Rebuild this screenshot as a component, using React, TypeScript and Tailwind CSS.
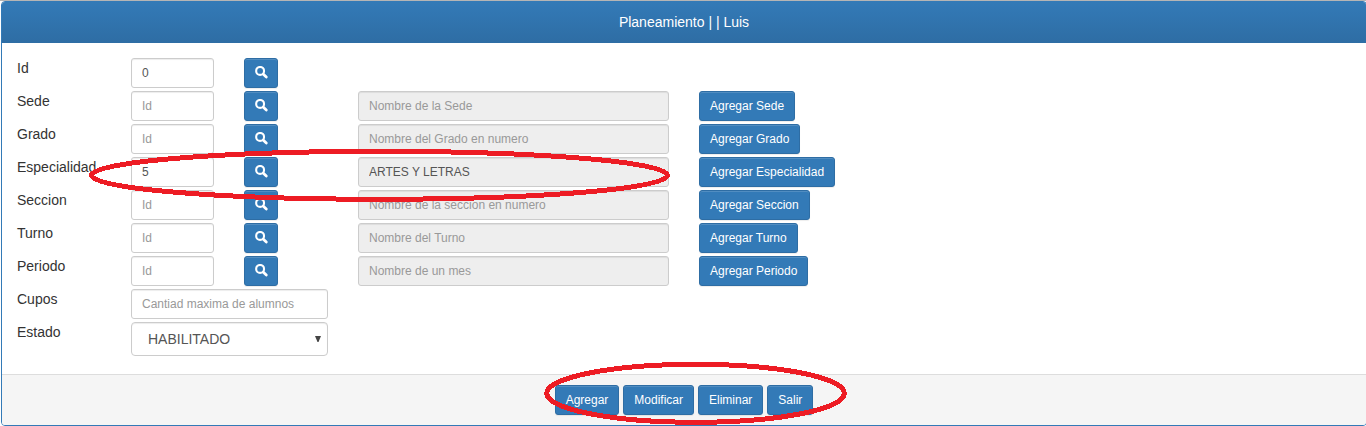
import React from "react";

type Lookup = {
  label: string;
  value?: string;
  description?: string;
  descriptionValue?: string;
  action?: string;
};

const lookups: Lookup[] = [
  { label: "Id", value: "0" },
  { label: "Sede", description: "Nombre de la Sede", action: "Agregar Sede" },
  { label: "Grado", description: "Nombre del Grado en numero", action: "Agregar Grado" },
  { label: "Especialidad", value: "5", descriptionValue: "ARTES Y LETRAS", action: "Agregar Especialidad" },
  { label: "Seccion", description: "Nombre de la seccion en numero", action: "Agregar Seccion" },
  { label: "Turno", description: "Nombre del Turno", action: "Agregar Turno" },
  { label: "Periodo", description: "Nombre de un mes", action: "Agregar Periodo" },
];

const inputClass =
  "block h-[30px] rounded-[3px] border border-[#ccc] px-[10px] text-[12px] leading-[18px] text-[#555] shadow-[inset_0_1px_1px_rgba(0,0,0,0.075)] outline-none placeholder:text-[#999]";

const buttonClass =
  "h-[30px] shrink-0 whitespace-nowrap rounded-[3px] border border-[#2e6da4] bg-[#337ab7] px-[10px] text-[12px] leading-[18px] text-white shadow-[inset_0_1px_0_rgba(255,255,255,0.15),0_1px_1px_rgba(0,0,0,0.075)]";

function SearchIcon() {
  return (
    <svg width="14" height="14" viewBox="0 0 14 14" fill="none" stroke="white" className="block">
      <circle cx="5.1" cy="4.9" r="3.95" strokeWidth="2.1" />
      <path d="M8.4 8.3 L11.3 11.1" strokeWidth="2.8" strokeLinecap="round" />
    </svg>
  );
}

function LookupRow({ row }: { row: Lookup }) {
  return (
    <div className="flex h-[33px] items-start">
      <label className="w-[114px] shrink-0 text-[14px] leading-[20px]">{row.label}</label>
      <input className={`${inputClass} w-[83px] bg-white`} placeholder="Id" defaultValue={row.value} />
      <button className={`${buttonClass} ml-[30px] w-[34px]`} aria-label="Buscar">
        <SearchIcon />
      </button>
      {row.action && (
        <>
          <input
            className={`${inputClass} ml-[80px] w-[311px] bg-[#eee]`}
            readOnly
            placeholder={row.description}
            defaultValue={row.descriptionValue}
          />
          <button className={`${buttonClass} ml-[30px]`}>{row.action}</button>
        </>
      )}
    </div>
  );
}

export default function App() {
  return (
    <div className="relative h-[426px] overflow-hidden border-t border-[#b5b5b5] bg-white pl-px font-['Liberation_Sans',Arial,sans-serif] text-[#333]">
      <div className="flex h-[425px] w-[1366px] flex-col overflow-hidden rounded-[4px] border border-[#337ab7] bg-white">
        <header className="h-[41px] shrink-0 bg-linear-to-b from-[#337ab7] to-[#2e6da4] pt-[10px] text-center text-[14px] leading-[20px] text-white">
          Planeamiento | | Luis
        </header>
        <main className="h-[331px] shrink-0 px-[15px] pt-[15px]">
          {lookups.map((row) => (
            <LookupRow key={row.label} row={row} />
          ))}
          <div className="flex h-[33px] items-start">
            <label className="w-[114px] shrink-0 text-[14px] leading-[20px]">Cupos</label>
            <input className={`${inputClass} w-[197px] bg-white`} placeholder="Cantiad maxima de alumnos" />
          </div>
          <div className="flex items-start">
            <label className="w-[114px] shrink-0 text-[14px] leading-[20px]">Estado</label>
            <div className="flex h-[34px] w-[197px] items-center justify-between rounded-[4px] border border-[#ccc] pl-[16px] pr-[6px] text-[14px] leading-[20px] text-[#555] shadow-[inset_0_1px_1px_rgba(0,0,0,0.075)]">
              <span>HABILITADO</span>
              <svg width="6" height="6" viewBox="0 0 6 6">
                <path d="M0 0H6L3.5 6H2.5Z" fill="#444" />
              </svg>
            </div>
          </div>
        </main>
        <footer className="flex grow items-start justify-center gap-[4px] border-t border-[#ddd] bg-[#f5f5f5] pt-[10px]">
          <button className={buttonClass}>Agregar</button>
          <button className={buttonClass}>Modificar</button>
          <button className={buttonClass}>Eliminar</button>
          <button className={buttonClass}>Salir</button>
        </footer>
      </div>
      <svg
        className="pointer-events-none absolute left-0 -top-px"
        width="1366"
        height="426"
        fill="none"
        stroke="#ed1c24"
        strokeWidth="5"
        shapeRendering="crispEdges"
      >
        <ellipse cx="379.5" cy="175.3" rx="288" ry="24" />
        <ellipse cx="695.5" cy="393.3" rx="148.8" ry="29" />
      </svg>
    </div>
  );
}
